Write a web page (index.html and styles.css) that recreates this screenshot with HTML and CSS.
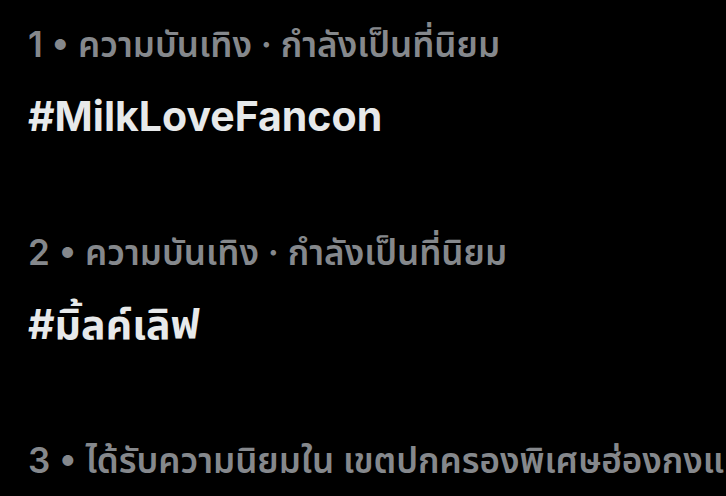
FILE: index.html
```html
<!DOCTYPE html>
<html lang="th">
<head>
<meta charset="utf-8">
<link rel="stylesheet" href="styles.css">
</head>
<body>
<div class="list">
  <div class="trend">
    <div class="meta">1 • ความบันเทิง · กำลังเป็นที่นิยม</div>
    <div class="name">#MilkLoveFancon</div>
  </div>
  <div class="trend">
    <div class="meta">2 • ความบันเทิง · กำลังเป็นที่นิยม</div>
    <div class="name">#มิ้ลค์เลิฟ</div>
  </div>
  <div class="trend">
    <div class="meta">3 • ได้รับความนิยมใน เขตปกครองพิเศษฮ่องกงแห่งสาธารณรัฐประชาชนจีน</div>
  </div>
</div>
</body>
</html>
```
FILE: styles.css
```css
html, body {
  margin: 0;
  padding: 0;
  background: #000;
  overflow: hidden;
}
body {
  width: 726px;
  height: 496px;
  font-family: "Inter", "Noto Sans Thai", "Noto Sans", "Liberation Sans", sans-serif;
}
.list {
  display: flex;
  flex-direction: column;
  gap: 88px;
  padding: 22px 0 0 28px;
}
.trend {
  display: flex;
  flex-direction: column;
  gap: 24px;
  overflow: hidden;
}
.meta {
  color: #85888c;
  font-size: 35px;
  font-weight: 600;
  line-height: 44px;
  height: 44px;
  white-space: nowrap;
}
.name {
  color: #e7e9ea;
  font-size: 41px;
  font-weight: 700;
  line-height: 52px;
  height: 52px;
  white-space: nowrap;
}
```
